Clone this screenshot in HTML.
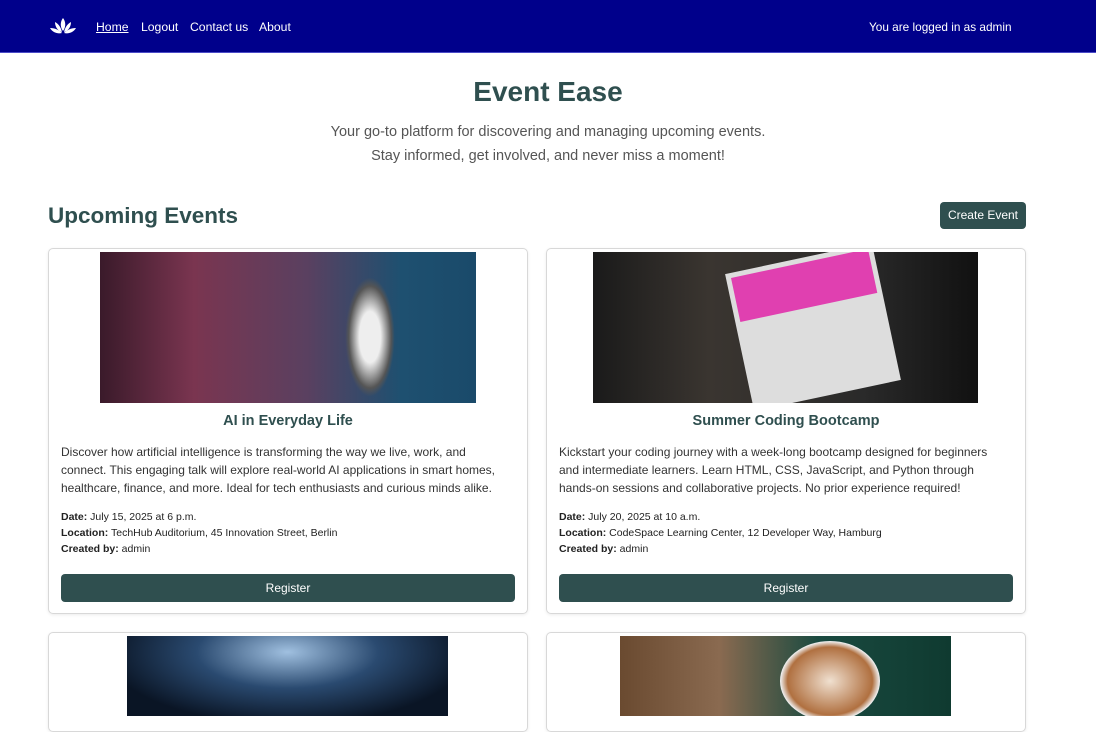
<!DOCTYPE html>
<html><head><meta charset="utf-8"><style>
*{box-sizing:border-box;margin:0;padding:0}
body{width:1096px;height:702px;overflow:hidden;background:#fff;font-family:"Liberation Sans",sans-serif;color:#212529;position:relative}
nav{position:absolute;left:0;top:0;width:1096px;height:53px;background:#00008b;border-bottom:1px solid #4b4bc8;color:#fff;font-size:12.2px}
nav a{position:absolute;top:20px;color:#fff;text-decoration:none}
.abs{position:absolute}
h1{position:absolute;left:0;width:1096px;text-align:center;top:76px;font-size:28px;font-weight:bold;color:#2f4f4f}
.sub{position:absolute;left:0;width:1096px;text-align:center;top:120px;font-size:14.5px;line-height:24px;color:#555}
h2{position:absolute;left:48px;top:203px;font-size:22.5px;color:#2f4f4f}
.btn{position:absolute;background:#2f4f4f;color:#fff;border-radius:4px;text-align:center;font-size:12px}
.card{position:absolute;border:1px solid #d8d8d8;border-radius:5px;width:480px;box-shadow:0 1px 3px rgba(0,0,0,.08);overflow:hidden}
.card .img{position:absolute;top:3px;overflow:hidden}
.t{position:absolute;left:0;width:100%;top:164px;text-align:center;font-size:14.5px;font-weight:bold;color:#2f4f4f}
.d{position:absolute;left:12px;top:194px;width:450px;font-size:12px;line-height:18px;color:#333}
.m{position:absolute;left:12px;top:260px;font-size:10.5px;line-height:16px;color:#222}
.card .btn{left:12px;width:454px;top:325px;height:28px;line-height:28px}
</style></head><body>
<nav>
<svg class="abs" style="left:50px;top:18px" width="26" height="18" viewBox="0 0 26 18"><path d="M13 0C10 4 10 9 13 13C16 9 16 4 13 0Z M5 4C5 9 8 13 12 14C11 10 9 6 5 4Z M21 4C21 9 18 13 14 14C15 10 17 6 21 4Z M0 10C3 15 8 16 12 15C9 12 5 10 0 10Z M26 10C23 15 18 16 14 15C17 12 21 10 26 10Z" fill="#fff"/></svg>
<a style="left:96px;text-decoration:underline">Home</a><a style="left:141px">Logout</a><a style="left:190px">Contact us</a><a style="left:259px">About</a>
<span class="abs" style="left:869px;top:20px;font-size:11.8px">You are logged in as admin</span>
</nav>
<h1>Event Ease</h1>
<div class="sub">Your go-to platform for discovering and managing upcoming events.<br>Stay informed, get involved, and never miss a moment!</div>
<h2>Upcoming Events</h2>
<div class="btn" style="left:940px;top:202px;width:86px;height:27px;line-height:27px">Create Event</div>

<div class="card" style="left:48px;top:248px;height:366px">
<div class="img" style="left:51px;width:376px;height:151px;background:linear-gradient(90deg,#3a1a2a,#7a3550 25%,#5a4060 55%,#1e5070 80%,#1a4a6a)"><div class="abs" style="left:245px;top:25px;width:50px;height:120px;background:radial-gradient(ellipse at center,#eee 30%,#555 60%,transparent 70%)"></div></div>
<div class="t">AI in Everyday Life</div>
<div class="d">Discover how artificial intelligence is transforming the way we live, work, and connect. This engaging talk will explore real-world AI applications in smart homes, healthcare, finance, and more. Ideal for tech enthusiasts and curious minds alike.</div>
<div class="m"><b>Date:</b> July 15, 2025 at 6 p.m.<br><b>Location:</b> TechHub Auditorium, 45 Innovation Street, Berlin<br><b>Created by:</b> admin</div>
<div class="btn">Register</div>
</div>

<div class="card" style="left:546px;top:248px;height:366px">
<div class="img" style="left:46px;width:385px;height:151px;background:linear-gradient(90deg,#1a1a1a,#3a3530 30%,#2a2a2a 70%,#111)"><div class="abs" style="left:145px;top:5px;width:150px;height:140px;background:#ddd;transform:rotate(-12deg)"><div style="margin:5px;height:45px;background:#e040b0"></div></div></div>
<div class="t">Summer Coding Bootcamp</div>
<div class="d">Kickstart your coding journey with a week-long bootcamp designed for beginners and intermediate learners. Learn HTML, CSS, JavaScript, and Python through hands-on sessions and collaborative projects. No prior experience required!</div>
<div class="m"><b>Date:</b> July 20, 2025 at 10 a.m.<br><b>Location:</b> CodeSpace Learning Center, 12 Developer Way, Hamburg<br><b>Created by:</b> admin</div>
<div class="btn">Register</div>
</div>

<div class="card" style="left:48px;top:632px;height:100px">
<div class="img" style="left:78px;width:321px;height:80px;background:radial-gradient(ellipse at 50% 20%,#a0c0e0,#2a4a70 40%,#0a1525 80%)"></div>
</div>
<div class="card" style="left:546px;top:632px;height:100px">
<div class="img" style="left:73px;width:331px;height:80px;background:linear-gradient(90deg,#6a4a30,#8a6a50 30%,#1a4a40 60%,#0f3a30)"><div class="abs" style="left:160px;top:5px;width:100px;height:80px;border-radius:50%;background:radial-gradient(#f0e0d0,#b07040 60%,#eee 70%)"></div></div>
</div>
</body></html>
